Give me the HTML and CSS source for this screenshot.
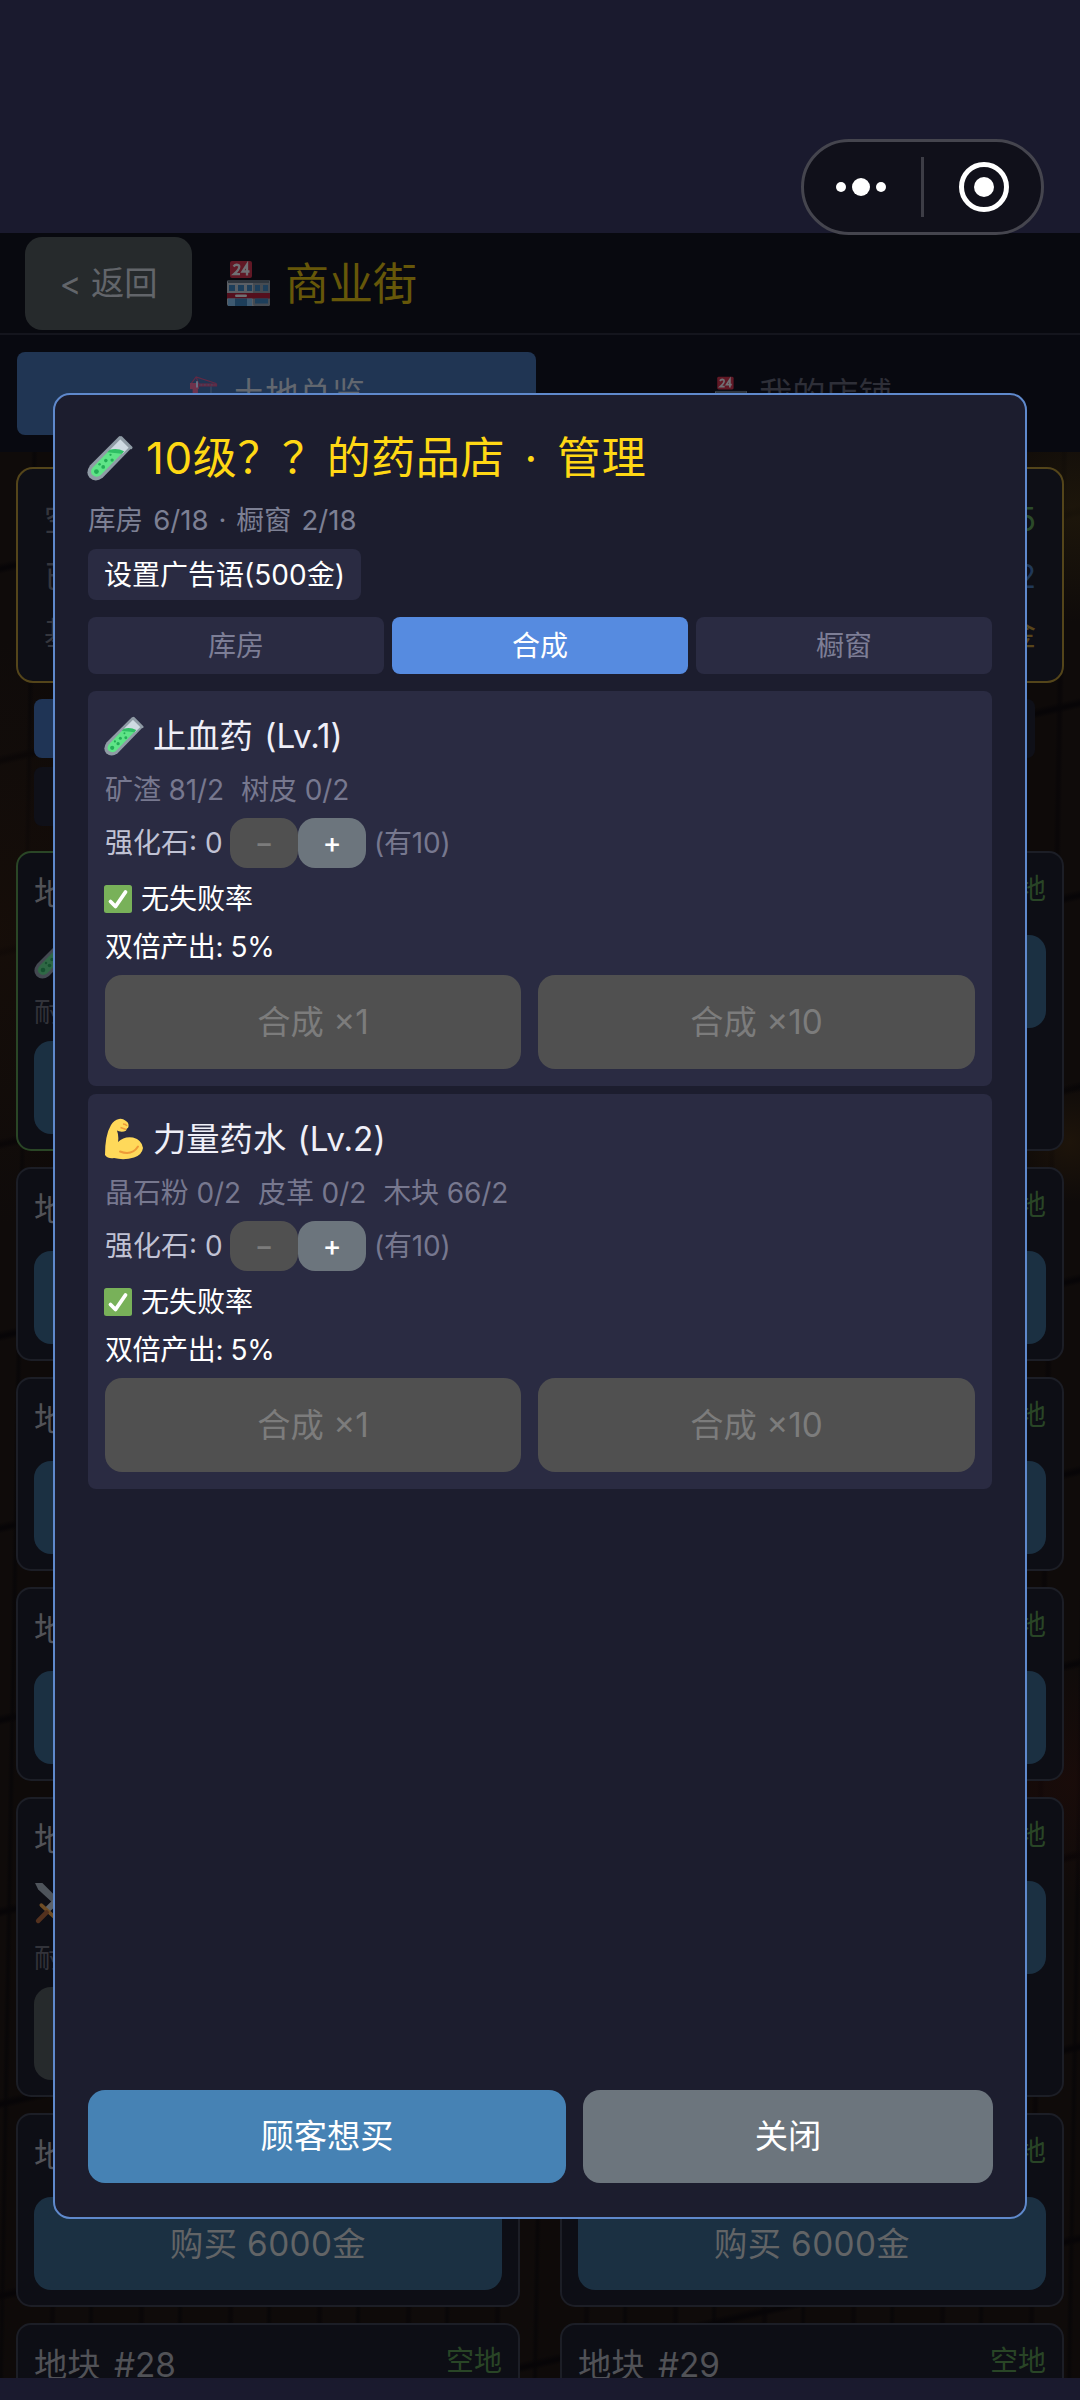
FILE: index.html
```html
<!DOCTYPE html>
<html lang="zh-CN">
<head>
<meta charset="utf-8">
<title>商业街</title>
<link rel="stylesheet" href="styles.css">
</head>
<body>
<svg class="defs" width="0" height="0" aria-hidden="true">
  <symbol id="tube" viewBox="0 0 44 44">
    <path d="M31 1 L43 12 L15 41 Q8 46 2.500 41 Q-2 36 3 29 Z" fill="#8f9ba5"/>
    <path d="M32 4 L40 12 L34 18 L22 14 Z" fill="#cfdae2"/>
    <path d="M20 16 Q28 13 34.500 16.500 L13 38.500 Q9 41.500 5 38 Q2.500 35 5.500 31 Z" fill="#5fe487"/>
    <path d="M22 14 Q29 12 35.500 15.500 L33.500 18 Q26 17 19.500 16.500 Z" fill="#2fbf64"/>
    <path d="M32.500 2.500 L42 12" stroke="#8f9ba5" stroke-width="3" stroke-linecap="round"/>
    <g fill="#24ad57"><circle cx="9" cy="35" r="2.300"/><circle cx="15.500" cy="30.500" r="1.800"/><circle cx="12" cy="28" r="1.200"/><circle cx="18" cy="24.500" r="1.700"/><circle cx="24" cy="24" r="1.600"/><circle cx="22.500" cy="19" r="1.100"/></g>
  </symbol>
  <symbol id="arm" viewBox="0 0 40 42">
    <path d="M15 1 Q18 0 22 3 Q25 5 24.500 7.500 Q25 10 22.500 11 Q23 13 20 13.500 Q15 14 13 12.500 Q15 18 14 24 Q20 18 29 19.500 Q38 22 39 30 Q38 37 30 39.500 Q20 42.500 10 40 Q4 41 1 37 Q1 17 7 7 Q10 2 15 1 Z" fill="#ffd95a"/>
    <path d="M16 33.500 Q28 38 34 28.500" fill="none" stroke="#ee9b38" stroke-width="2" stroke-linecap="round"/>
    <path d="M16.500 9.500 L22 11.500 M19 6 Q22 6 23 8" fill="none" stroke="#ee9b38" stroke-width="1.400"/>
  </symbol>
  <symbol id="check" viewBox="0 0 28 28">
    <rect width="28" height="28" rx="2.500" fill="#78b159"/>
    <path d="M6.500 16.500 L11.500 21.500 L21.500 7" fill="none" stroke="#fff" stroke-width="3.800" stroke-linecap="round" stroke-linejoin="round"/>
  </symbol>
  <symbol id="store" viewBox="0 0 43 45">
    <rect x="3" y="0" width="22" height="17" rx="2" fill="#dd2e44"/>
    <path d="M6.500 5.500 Q9 2.500 12 4.500 Q13.500 7.500 7 13.200 H13 M20 14.500 V3.500 L15.500 10.500 H22.500" fill="none" stroke="#fff" stroke-width="2.300"/>
    <rect x="0" y="19" width="43" height="26" rx="2" fill="#ccd6dd"/>
    <rect x="26" y="19" width="17" height="26" rx="2" fill="#99a6b0"/>
    <path d="M1 19 H42 V22 H1 Z" fill="#66757f"/>
    <path d="M2 24 H8 V30 H2 Z M11 24 H17 V30 H11 Z M20 24 H25 V30 H20 Z M28 24 H33 V30 H28 Z M36 24 H41 V30 H36 Z" fill="#3b88c3"/>
    <rect x="0" y="32" width="43" height="5.500" fill="#be1931"/>
    <rect x="8" y="33.500" width="12" height="2.500" rx="1.200" fill="#fff"/>
    <path d="M1 37.500 H8 V45 H1 Z M20 37.500 H25 V45 H20 Z" fill="#88c9f9"/>
    <path d="M8 37.500 H20 V45 H8 Z M28 37.500 H41 V42.500 H28 Z" fill="#3b88c3"/>
  </symbol>
  <symbol id="crane" viewBox="0 0 32 40">
    <path d="M3 14 H9 V40 H3 Z" fill="#dd2e44"/>
    <path d="M1 9 L7 1 L30 8.500 M7 1 L10 9" fill="none" stroke="#be1931" stroke-width="1.300"/>
    <path d="M0 8 H10 V15 H0 Z" fill="#dd2e44"/>
    <path d="M9 8.500 H31 V12 H9 Z" fill="#be1931"/>
    <path d="M12 10.200 H29" stroke="#66757f" stroke-width="1" stroke-dasharray="2 2"/>
    <path d="M7 6 H9 V13 H7 Z" fill="#ccd6dd"/>
    <path d="M24 12 V32" stroke="#66757f" stroke-width="1.200"/>
  </symbol>
  <symbol id="swords" viewBox="0 0 42 42">
    <path d="M1 2 H8 L34 28 L30 32 L4 8 Z" fill="#a9b5bd"/>
    <path d="M41 2 H34 L10 26 L14 30 L38 8 Z" fill="#ccd6dd"/>
    <path d="M7 23 L19 34 M35 23 L23 34" stroke="#f4a33a" stroke-width="3.500" stroke-linecap="round"/>
    <path d="M12 30 L4 38 M30 30 L38 38" stroke="#b5622c" stroke-width="4.500" stroke-linecap="round"/>
  </symbol>
</svg>

<div class="screen">
  <div class="status-area"></div>
  <div class="street">
    <header class="topbar">
      <div class="back">&lt; 返回</div>
      <svg class="store-icon"><use href="#store"/></svg>
      <h1 class="page-title">商业街</h1>
    </header>
    <nav class="page-tabs">
      <div class="page-tab page-tab-on"><svg class="tab-icon"><use href="#crane"/></svg><span>土地总览</span></div>
      <div class="page-tab"><svg class="tab-icon"><use href="#store"/></svg><span>我的店铺</span></div>
    </nav>
    <main class="town">
      <section class="summary">
        <div class="sum-row"><span>空地</span><span class="green">5</span></div>
        <div class="sum-row"><span>已售</span><span class="blue">2</span></div>
        <div class="sum-row"><span>基础地价</span><span class="gold">金</span></div>
      </section>
      <div class="filters">
        <div class="chip chip-on"></div><div class="chip"></div>
        <div class="chip"></div>
      </div>
      <div class="plots">
        <article class="plot plot-mine">
          <div class="plot-head"><span>地块</span></div>
          <svg class="plot-icon"><use href="#tube"/></svg>
          <div class="plot-note">耐久</div>
          <div class="plot-btn"></div>
        </article>
        <article class="plot"><div class="plot-head"><span>地块</span><span class="free">空地</span></div><div class="plot-btn"></div></article>
        <article class="plot"><div class="plot-head"><span>地块</span><span class="free">空地</span></div><div class="plot-btn"></div></article>
        <article class="plot"><div class="plot-head"><span>地块</span><span class="free">空地</span></div><div class="plot-btn"></div></article>
        <article class="plot"><div class="plot-head"><span>地块</span><span class="free">空地</span></div><div class="plot-btn"></div></article>
        <article class="plot"><div class="plot-head"><span>地块</span><span class="free">空地</span></div><div class="plot-btn"></div></article>
        <article class="plot"><div class="plot-head"><span>地块</span><span class="free">空地</span></div><div class="plot-btn"></div></article>
        <article class="plot"><div class="plot-head"><span>地块</span><span class="free">空地</span></div><div class="plot-btn"></div></article>
        <article class="plot">
          <div class="plot-head"><span>地块</span></div>
          <svg class="plot-icon"><use href="#swords"/></svg>
          <div class="plot-note">耐久</div>
          <div class="plot-btn plot-btn-off"></div>
        </article>
        <article class="plot"><div class="plot-head"><span>地块</span><span class="free">空地</span></div><div class="plot-btn"></div></article>
        <article class="plot"><div class="plot-head"><span>地块</span><span class="free">空地</span></div><div class="plot-btn">购买 6000金</div></article>
        <article class="plot"><div class="plot-head"><span>地块</span><span class="free">空地</span></div><div class="plot-btn">购买 6000金</div></article>
        <article class="plot"><div class="plot-head"><span>地块 #28</span><span class="free">空地</span></div><div class="plot-btn"></div></article>
        <article class="plot"><div class="plot-head"><span>地块 #29</span><span class="free">空地</span></div><div class="plot-btn"></div></article>
      </div>
    </main>
  </div>
  <div class="home-area"></div>

  <div class="capsule">
    <svg width="243" height="96" viewBox="0 0 243 96">
      <rect x="1.500" y="1.500" width="240" height="93" rx="46.500" fill="#10101a" stroke="#45454e" stroke-width="3"/>
      <g fill="#fff"><circle cx="40" cy="48" r="5"/><circle cx="60" cy="48" r="9"/><circle cx="80" cy="48" r="5"/><circle cx="183" cy="48" r="10"/></g>
      <path d="M121.500 18 V78" stroke="#3d3d46" stroke-width="3"/>
      <circle cx="183" cy="48" r="22.500" fill="none" stroke="#fff" stroke-width="5"/>
    </svg>
  </div>

  <div class="modal">
    <h2 class="modal-title"><svg class="title-icon"><use href="#tube"/></svg><span>10级？？的药品店<span class="dot">·</span>管理</span></h2>
    <div class="capacity">库房 6/18 · 橱窗 2/18</div>
    <div class="slogan-btn">设置广告语(500金)</div>
    <div class="tabs">
      <div class="tab">库房</div><div class="tab tab-on">合成</div><div class="tab">橱窗</div>
    </div>
    <div class="recipes">
      <section class="recipe">
        <h3 class="recipe-name"><svg class="recipe-icon"><use href="#tube"/></svg><span>止血药 (Lv.1)</span></h3>
        <div class="materials"><span>矿渣 81/2</span><span>树皮 0/2</span></div>
        <div class="stones"><span class="stones-label">强化石: 0</span><div class="step step-off">−</div><div class="step">+</div><span class="owned">(有10)</span></div>
        <div class="rate"><svg class="check-icon"><use href="#check"/></svg><span>无失败率</span></div>
        <div class="double">双倍产出: 5%</div>
        <div class="craft"><div class="craft-btn craft-one">合成 ×1</div><div class="craft-btn">合成 ×10</div></div>
      </section>
      <section class="recipe">
        <h3 class="recipe-name"><svg class="recipe-icon"><use href="#arm"/></svg><span>力量药水 (Lv.2)</span></h3>
        <div class="materials"><span>晶石粉 0/2</span><span>皮革 0/2</span><span>木块 66/2</span></div>
        <div class="stones"><span class="stones-label">强化石: 0</span><div class="step step-off">−</div><div class="step">+</div><span class="owned">(有10)</span></div>
        <div class="rate"><svg class="check-icon"><use href="#check"/></svg><span>无失败率</span></div>
        <div class="double">双倍产出: 5%</div>
        <div class="craft"><div class="craft-btn craft-one">合成 ×1</div><div class="craft-btn">合成 ×10</div></div>
      </section>
    </div>
    <footer class="actions"><div class="action action-main">顾客想买</div><div class="action">关闭</div></footer>
  </div>
</div>
</body>
</html>
```
FILE: styles.css
```css
* { box-sizing: border-box; }
body { margin: 0; background: #1a1a2e; }
h1, h2, h3 { margin: 0; font-weight: 400; }
.defs { position: absolute; }
.screen {
  position: relative; width: 1080px; height: 2400px; overflow: hidden;
  display: flex; flex-direction: column; background: #1a1a2e;
  font-family: Inter, "Noto Sans CJK SC", sans-serif; font-weight: 400;
  white-space: nowrap;
}
.status-area { height: 233px; flex: none; }
.home-area { height: 22px; flex: none; }
.street { flex: none; height: 2145px; overflow: hidden; display: flex; flex-direction: column; }

.topbar {
  flex: none; height: 102px; padding: 0 25px; display: flex; align-items: center;
  background: #08090f; border-bottom: 2px solid #14151d;
}
.back {
  width: 167px; height: 93px; border-radius: 17px; background: #262a2c; color: #62656a;
  font-size: 33.3px; line-height: 93px; text-align: center;
}
.store-icon { width: 43px; height: 45px; margin-left: 35px; opacity: .42; }
.page-title { margin-left: 15px; padding-top: 2px; color: #665709; font-size: 44px; line-height: 60px; }
.page-tabs { flex: none; display: flex; gap: 8px; padding: 17px; height: 117px; background: #080910; }
.page-tab {
  flex: 1; border-radius: 8px; display: flex; justify-content: center; align-items: center;
  gap: 12px; font-size: 33.3px; line-height: 40px; color: #2e2f38;
}
.page-tab-on { background: #203553; color: #62676f; }
.tab-icon { width: 32px; height: 35px; opacity: .42; }

.town {
  flex: 1; padding: 15px 16px 0;
  background:
    radial-gradient(circle at 1075px 60px, #261d0b99 0, transparent 110px),
    radial-gradient(circle at 1070px 690px, #2a1c0a88 0, transparent 60px),
    radial-gradient(circle at 1070px 1330px, #220c0988 0, transparent 120px),
    radial-gradient(ellipse at 0 480px, #1a0f0899 0, transparent 200px),
    repeating-linear-gradient(167deg, transparent 0 108px, #070507 113px 115px, transparent 119px 187px),
    repeating-linear-gradient(91deg, #0f0b0a 0 31px, #090708 34px 35px, #0e0a09 38px 81px, #0a0708 84px 86px, #0f0b0a 89px);
}
.summary {
  height: 216px; padding: 22px 26px; border: 2px solid #54451a; border-radius: 17px;
  background: #0e0f16; font-size: 32px; line-height: 57px; color: #35363d;
}
.sum-row { display: flex; justify-content: space-between; height: 57px; }
.green { color: #2b4a29; }
.blue { color: #203858; }
.gold { color: #58451a; }
.filters { display: grid; grid-template-columns: 1fr 1fr; gap: 9px 8px; padding: 16px 13px 0 18px; margin-right: 16px; }
.chip { height: 59px; border-radius: 8px; background: #0f1018; }
.chip-on { background: #1f3455; }
.plots { display: grid; grid-template-columns: 504px 504px; column-gap: 40px; row-gap: 16px; margin-top: 25px; }
.plot { min-height: 194px; padding: 16px 16px 15px; border: 2px solid #1c1e26; border-radius: 15px; background: #0d0e15; }
.plot-mine { border-color: #2a4626; }
.plot-head {
  display: flex; justify-content: space-between; height: 66px; line-height: 49px;
  font-size: 33.3px; word-spacing: 4px; color: #515257;
}
.free { font-size: 28px; line-height: 41px; color: #294526; }
.plot-icon { display: block; width: 44px; height: 44px; opacity: .42; margin-bottom: 14px; }
.plot-note { height: 48px; font-size: 27px; line-height: 40px; color: #32333a; }
.plot-btn {
  height: 93px; border-radius: 17px; background: #1b3042; color: #626466;
  font-size: 33.3px; letter-spacing: .4px; line-height: 94px; text-align: center;
}
.plot-btn-off { background: #262a2c; }

.capsule { position: absolute; left: 801px; top: 139px; width: 243px; height: 96px; }

.modal {
  position: absolute; left: 53px; top: 393px; width: 974px; height: 1826px;
  padding: 33px; border: 2px solid #5f89cc; border-radius: 17px; background: #1c1d2e;
  display: flex; flex-direction: column;
}
.modal-title {
  height: 60px; display: flex; align-items: center; gap: 13px;
  font-size: 44px; line-height: 62px; letter-spacing: .6px; color: #ffd814;
}
.title-icon { width: 46px; height: 46px; margin-left: -1px; }
.dot { display: inline-block; width: 52px; text-align: center; }
.capacity { height: 61px; padding-top: 12px; font-size: 27.6px; line-height: 40px; word-spacing: 2.2px; color: #7d8094; }
.slogan-btn {
  align-self: flex-start; width: 273px; height: 51px; border-radius: 8px; background: #2a2b42;
  font-size: 28px; line-height: 52px; text-align: center; color: #fff;
}
.tabs { display: grid; grid-template-columns: repeat(3, 1fr); gap: 8px; margin-top: 17px; }
.tab { height: 57px; border-radius: 8px; background: #2a2b42; color: #7d7e96; font-size: 28px; line-height: 58px; text-align: center; }
.tab-on { background: #568be0; color: #fff; }
.recipes { flex: 1; display: flex; flex-direction: column; gap: 8px; margin-top: 17px; }
.recipe { height: 395px; padding: 17px; border-radius: 8px; background: #2a2b42; color: #fff; font-size: 28px; }
.recipe-name { height: 56px; display: flex; align-items: center; gap: 9px; font-size: 33.3px; line-height: 57px; word-spacing: 2px; color: #efeff8; }
.recipe-icon { width: 40px; height: 42px; margin-left: -1px; }
.materials { display: flex; gap: 17px; height: 54px; line-height: 53px; color: #77788f; letter-spacing: -.1px; }
.stones { display: flex; align-items: center; height: 50px; line-height: 51px; color: #c0c2d4; }
.stones-label { width: 125px; }
.step { width: 68px; height: 50px; border-radius: 17px; background: #6c757d; color: #fff; text-align: center; line-height: 50px; font-weight: 500; }
.step-off { background: #505050; color: #7c7c7c; }
.owned { margin-left: 8px; letter-spacing: -.2px; color: #77788f; }
.rate { display: flex; align-items: center; gap: 9px; height: 61px; line-height: 62px; }
.check-icon { width: 28px; height: 28px; margin-left: -1px; }
.double { height: 46px; line-height: 37px; letter-spacing: -.4px; }
.craft { display: flex; gap: 17px; }
.craft-btn {
  flex: 1; height: 94px; border-radius: 17px; background: #505050; color: #7c7c7c;
  font-size: 33.3px; line-height: 95px; text-align: center;
}
.craft-one { flex: 0 0 416px; }
.actions { display: flex; gap: 17px; height: 93px; margin: 0 -1px 1px 0; }
.action { flex: 1; border-radius: 17px; background: #6c757d; color: #fff; font-size: 33.3px; line-height: 93px; text-align: center; }
.action-main { flex: 0 0 478px; background: #4682b4; }
```
